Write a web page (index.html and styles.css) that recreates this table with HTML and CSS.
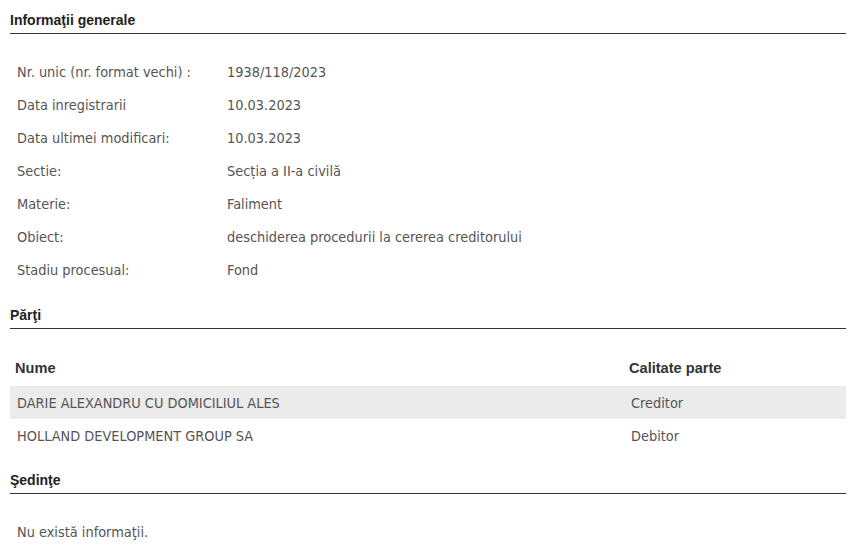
FILE: index.html
```html
<!DOCTYPE html>
<html>
<head>
    <title>Dosar</title>
    <link rel="stylesheet" href="styles.css">
</head>
<body>
    <div class="page">
        <h2 class="section-title">Informaţii generale</h2>
        <table class="info">
            <tr><td class="label">Nr. unic (nr. format vechi) :</td><td>1938/118/2023</td></tr>
            <tr><td class="label">Data inregistrarii</td><td>10.03.2023</td></tr>
            <tr><td class="label">Data ultimei modificari:</td><td>10.03.2023</td></tr>
            <tr><td class="label">Sectie:</td><td>Secția a II-a civilă</td></tr>
            <tr><td class="label">Materie:</td><td>Faliment</td></tr>
            <tr><td class="label">Obiect:</td><td>deschiderea procedurii la cererea creditorului</td></tr>
            <tr><td class="label">Stadiu procesual:</td><td>Fond</td></tr>
        </table>

        <h2 class="section-title">Părţi</h2>
        <table class="parties">
            <thead>
                <tr><th class="name">Nume</th><th>Calitate parte</th></tr>
            </thead>
            <tbody>
                <tr class="odd"><td>DARIE ALEXANDRU CU DOMICILIUL ALES</td><td>Creditor</td></tr>
                <tr><td>HOLLAND DEVELOPMENT GROUP SA</td><td>Debitor</td></tr>
            </tbody>
        </table>

        <h2 class="section-title">Şedinţe</h2>
        <p class="empty">Nu există informaţii.</p>
    </div>
</body>
</html>
```

FILE: styles.css
```css
body {
    margin: 0;
    font-family: Tahoma, "DejaVu Sans Condensed", sans-serif;
    font-size: 14.4px;
    color: #555;
    background: #fff;
}

.page {
    padding: 10px 9px 0 10px;
}

.section-title {
    font-family: "Liberation Sans", Arial, sans-serif;
    font-size: 14px;
    font-weight: bold;
    color: #222;
    margin: 0;
    padding: 2px 0 5px 0;
    border-bottom: 1px solid #333;
}

.info {
    border-collapse: collapse;
    margin: 21px 0 19px 0;
}

.info td {
    height: 33px;
    padding: 0 0 0 7px;
    vertical-align: middle;
}

.info td.label {
    width: 203px;
}

.parties {
    width: 100%;
    border-collapse: collapse;
    margin: 20px 0 18px 0;
}

.parties th {
    font-family: "Liberation Sans", Arial, sans-serif;
    font-size: 14.6px;
    font-weight: bold;
    color: #333;
    text-align: left;
    height: 37px;
    padding: 0 0 0 5px;
}

.parties th.name {
    width: 609px;
}

.parties td {
    height: 33px;
    padding: 0 0 0 7px;
}

.parties tr.odd td {
    background: #ebebeb;
}

.empty {
    margin: 0;
    padding: 30px 0 0 7px;
}
```
